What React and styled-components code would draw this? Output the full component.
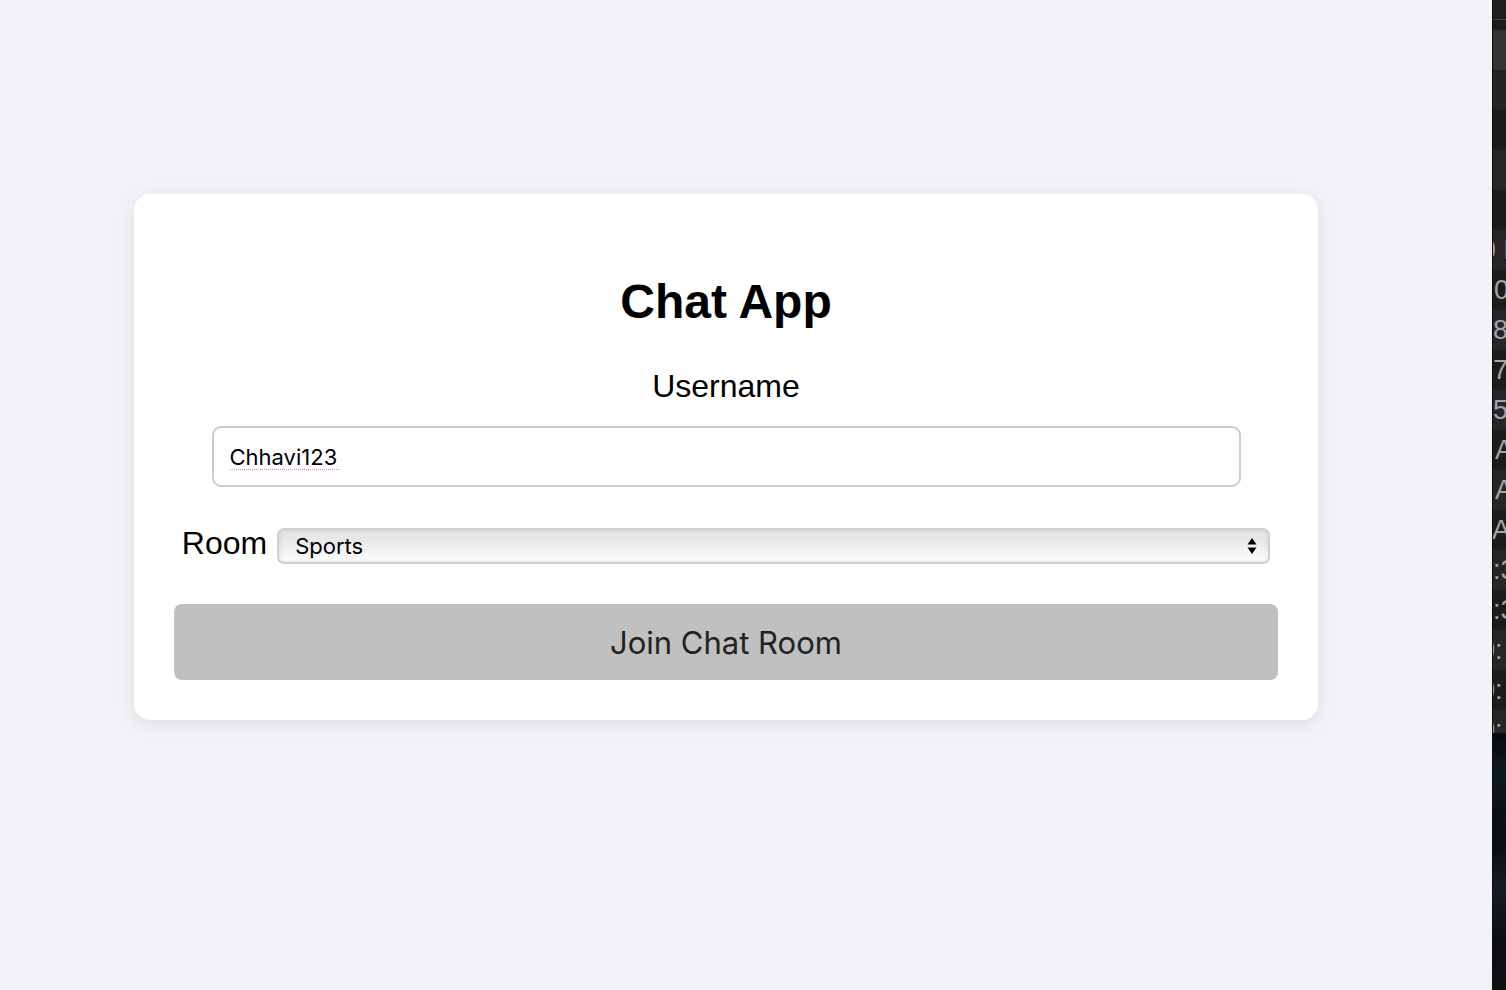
import React from "react";
import styled, { createGlobalStyle } from "styled-components";

const Global = createGlobalStyle`
  html, body { margin: 0; padding: 0; }
  body { background: #f3f3f7; font-family: "Liberation Sans", Arial, sans-serif; }
`;

const Screen = styled.div`
  display: flex;
  width: 1506px;
  height: 990px;
  overflow: hidden;
`;

const Main = styled.main`
  flex: 1;
  background: #f3f3f7;
  display: flex;
  flex-direction: column;
  align-items: flex-start;
  padding: 194px 0 0 134px;
  box-sizing: border-box;
`;

const Card = styled.div`
  width: 1184px;
  box-sizing: border-box;
  background: #ffffff;
  border-radius: 16px;
  box-shadow: 0 4px 18px rgba(0, 0, 0, 0.09);
  padding: 40px;
  display: flex;
  flex-direction: column;
  align-items: center;
`;

const Title = styled.h1`
  margin: 40px 0 0;
  font-family: "Liberation Sans", Arial, sans-serif;
  font-size: 48px;
  font-weight: 700;
  line-height: 55px;
  color: #000;
`;

const Label = styled.label`
  font-family: "Liberation Sans", Arial, sans-serif;
  font-size: 32px;
  line-height: 37px;
  color: #000;
  margin-top: ${(p) => p.$top || 0}px;
`;

const InputWrap = styled.div`
  position: relative;
  margin-top: 21px;
`;

const TextInput = styled.input`
  display: block;
  width: 1029px;
  height: 61px;
  box-sizing: border-box;
  border: 2px solid #cdcdcd;
  border-radius: 9px;
  padding: 0 16px;
  font-family: Inter, "Open Sans", sans-serif;
  font-size: 22px;
  color: #000;
  background: #fff;
  outline: none;
`;

const SpellMark = styled.span`
  position: absolute;
  left: 18px;
  top: 43px;
  width: 109px;
  height: 0;
  border-top: 1.5px dotted #e98a84;
  pointer-events: none;
`;

const RoomRow = styled.div`
  margin-top: 38px;
  display: flex;
  align-items: baseline;
  gap: 10px;
`;

const SelectWrap = styled.div`
  position: relative;
  display: inline-flex;
`;

const Select = styled.select`
  appearance: none;
  -webkit-appearance: none;
  width: 993px;
  height: 36px;
  box-sizing: border-box;
  border: 2px solid #d0d0d0;
  border-radius: 7px;
  padding: 0 16px;
  font-family: Inter, "Open Sans", sans-serif;
  font-size: 22px;
  color: #000;
  background: linear-gradient(
    to bottom,
    #e4e4e4 0%,
    #e9e9e9 35%,
    #f3f3f3 65%,
    #fcfcfc 100%
  );
  box-shadow: inset -3px 0 4px rgba(0, 0, 0, 0.04), inset 3px 0 4px rgba(0, 0, 0, 0.05);
  outline: none;
`;

const Arrows = styled.svg`
  position: absolute;
  right: 13px;
  top: 50%;
  transform: translateY(-50%);
  pointer-events: none;
`;

const JoinButton = styled.button`
  margin-top: 40px;
  align-self: stretch;
  height: 76px;
  border: none;
  border-radius: 8px;
  background: #c0c0c0;
  color: #222;
  font-family: Inter, "Open Sans", sans-serif;
  font-size: 31px;
  cursor: pointer;
`;

const Strip = styled.aside`
  width: 13px;
  flex-shrink: 0;
  background: #1c1c1c;
  border-left: 1px solid #0c0c0c;
  display: flex;
  flex-direction: column;
  overflow: hidden;
`;

const StripTop = styled.div`
  height: 19px;
  flex-shrink: 0;
  background: #1e1e1e;
  border-bottom: 1px solid #444;
`;

const StripBand = styled.div`
  height: ${(p) => p.$h}px;
  background: ${(p) => p.$bg};
  flex-shrink: 0;
`;

const TermRow = styled.div`
  height: ${(p) => p.$h || 40}px;
  flex-shrink: 0;
  background: ${(p) => (p.$odd ? "#1c1c1c" : "#262626")};
  color: #a4a4a4;
  font-family: "Liberation Sans", Arial, sans-serif;
  font-size: 27px;
  line-height: 40px;
  white-space: nowrap;
  overflow: hidden;
  text-indent: ${(p) => p.$indent}px;
`;

const StripImage = styled.div`
  flex: 1;
  background: linear-gradient(
    to bottom,
    #070a0d 0%,
    #0e1a20 15%,
    #0a1116 30%,
    #0c0f12 45%,
    #161c24 60%,
    #0c0f14 80%,
    #101010 100%
  );
`;

const rows = [
  { t: "9 P", i: -12 },
  { t: "0", i: 1 },
  { t: "8", i: 0 },
  { t: "7", i: 0 },
  { t: "5", i: 0 },
  { t: "A", i: 2 },
  { t: "A", i: 2 },
  { t: "A", i: -1 },
  { t: ":3", i: 0 },
  { t: ":3", i: 0 },
  { t: "0:", i: -13 },
  { t: "0:", i: -13 },
  { t: "0:", i: -13, h: 23 },
];

export default function App() {
  return (
    <>
      <Global />
      <Screen>
        <Main>
          <Card>
            <Title>Chat App</Title>
            <Label $top={39} htmlFor="username">Username</Label>
            <InputWrap>
              <TextInput id="username" type="text" defaultValue="Chhavi123" />
              <SpellMark />
            </InputWrap>
            <RoomRow>
              <Label htmlFor="room">Room</Label>
              <SelectWrap>
                <Select id="room" defaultValue="Sports">
                  <option>General</option>
                  <option>Sports</option>
                  <option>Technology</option>
                  <option>Music</option>
                </Select>
                <Arrows width="10" height="20" viewBox="0 0 10 20">
                  <path d="M5 2 L9.5 8.5 L0.5 8.5 Z" fill="#000" />
                  <path d="M5 18 L9.5 11.5 L0.5 11.5 Z" fill="#000" />
                </Arrows>
              </SelectWrap>
            </RoomRow>
            <JoinButton type="button">Join Chat Room</JoinButton>
          </Card>
        </Main>
        <Strip>
          <StripTop />
          <StripBand $h={10} $bg="#1c1c1c" />
          <StripBand $h={40} $bg="#333333" />
          <StripBand $h={40} $bg="#242424" />
          <StripBand $h={40} $bg="#1b1b1b" />
          <StripBand $h={40} $bg="#262626" />
          <StripBand $h={40} $bg="#1b1b1b" />
          {rows.map((r, k) => (
            <TermRow key={k} $odd={k % 2 === 1} $indent={r.i} $h={r.h}>
              {r.t}
            </TermRow>
          ))}
          <StripImage />
        </Strip>
      </Screen>
    </>
  );
}
